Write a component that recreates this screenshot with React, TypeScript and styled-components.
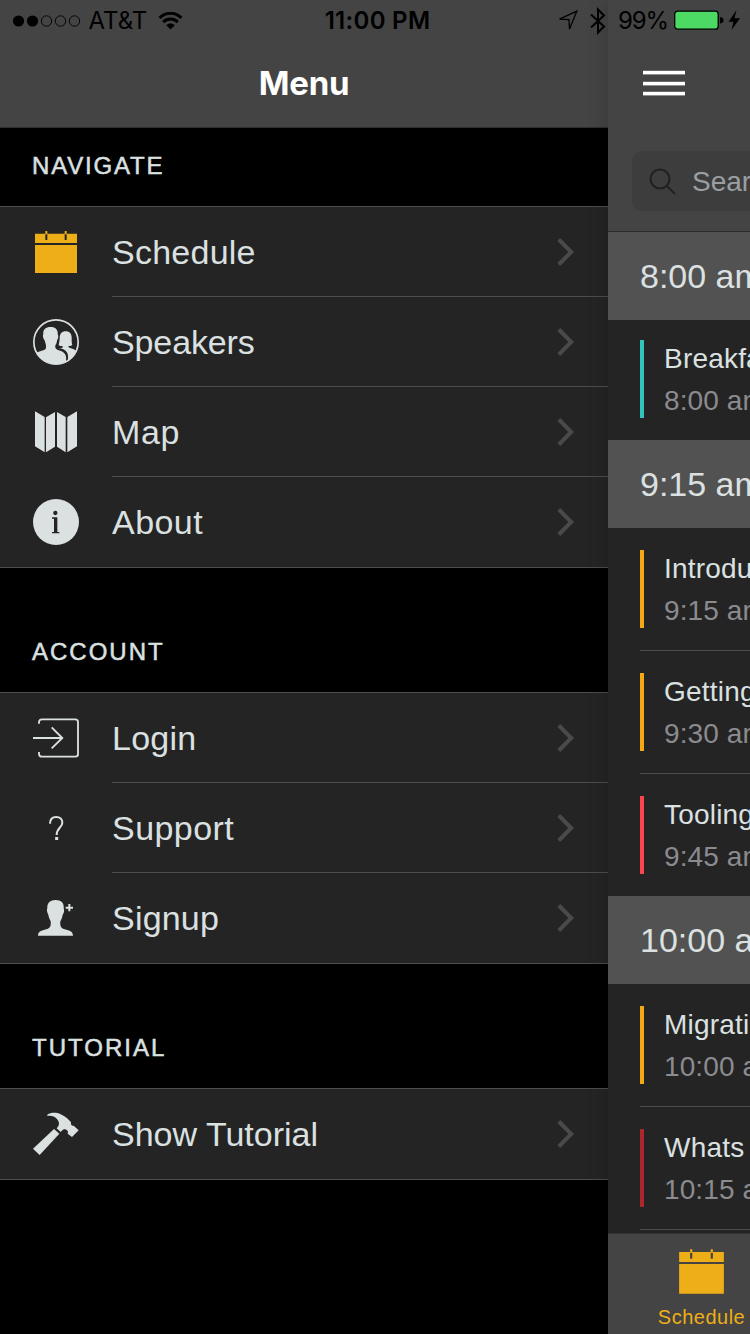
import React from "react";
import styled, { createGlobalStyle } from "styled-components";

const sans = `"Liberation Sans", Arial, Helvetica, sans-serif`;
const system = `Inter, "Liberation Sans", sans-serif`;

const colors = {
  bar: "#444444",
  row: "#242424",
  line: "#4d4d4d",
  text: "#dbe0e1",
  muted: "#8b8b8f",
  accent: "#eeae17",
};

const GlobalStyle = createGlobalStyle`
  *, *::before, *::after { box-sizing: border-box; }
  html, body { margin: 0; background: #000; }
  body { width: 750px; height: 1334px; overflow: hidden; }
`;

const Screen = styled.div`
  position: relative;
  display: flex;
  width: 750px;
  height: 1334px;
  overflow: hidden;
  background: #000;
  font-family: ${sans};
  color: ${colors.text};
`;

/* Status bar */

const StatusBar = styled.div`
  position: absolute;
  inset: 0 0 auto 0;
  z-index: 3;
  height: 42px;
  display: grid;
  grid-template-columns: 1fr auto 1fr;
  align-items: center;
  padding: 0 9px 0 12px;
  font: 400 24px/42px ${system};
  color: #000;
`;

const StatusGroup = styled.div<{ $end?: boolean }>`
  display: flex;
  align-items: center;
  gap: ${(p) => (p.$end ? 12 : 0)}px;
  height: 42px;
  justify-content: ${(p) => (p.$end ? "flex-end" : "flex-start")};
`;

const StatusText = styled.span<{ $bold?: boolean; $spacing?: number; $left?: number; $right?: number }>`
  font-weight: ${(p) => (p.$bold ? 600 : 400)};
  letter-spacing: ${(p) => p.$spacing ?? 0}px;
  margin-left: ${(p) => p.$left ?? 0}px;
  margin-right: ${(p) => p.$right ?? 0}px;
  white-space: nowrap;
`;

/* Menu side */

const MenuPane = styled.nav`
  width: 608px;
  flex: none;
  display: flex;
  flex-direction: column;
`;

const MenuHeader = styled.header`
  height: 128px;
  padding-top: 39px;
  background: ${colors.bar};
  border-bottom: 1px solid #2e2e2e;
  display: flex;
  align-items: center;
  justify-content: center;
`;

const MenuTitle = styled.h1`
  margin: 0;
  font: 700 33px/40px ${system};
  letter-spacing: -0.2px;
  color: #fff;
`;

const SectionLabel = styled.h2<{ $first?: boolean }>`
  margin: 0;
  height: ${(p) => (p.$first ? 78 : 124)}px;
  padding: 0 32px 25px;
  display: flex;
  align-items: flex-end;
  font-size: 24px;
  line-height: 30px;
  font-weight: 400;
  letter-spacing: ${(p) => (p.$first ? 1.8 : 2)}px;
  -webkit-text-stroke: 0.5px ${colors.text};
`;

const MenuList = styled.ul`
  list-style: none;
  margin: 0;
  padding: 0;
  background: ${colors.row};
  border-top: 1px solid ${colors.line};
  border-bottom: 1px solid ${colors.line};
`;

const MenuRow = styled.li`
  display: flex;
  align-items: stretch;
  height: 90px;
  padding-left: 33px;
`;

const IconSlot = styled.div<{ $active?: boolean }>`
  width: 79px;
  display: flex;
  align-items: center;
  color: ${(p) => (p.$active ? colors.accent : colors.text)};
`;

const RowBody = styled.div`
  flex: 1;
  display: flex;
  align-items: center;
  justify-content: space-between;
  padding-right: 33px;
  border-bottom: 1px solid ${colors.line};

  ${MenuRow}:last-child & {
    border-bottom-color: transparent;
  }
`;

const RowLabel = styled.span<{ $spacing: number }>`
  font-size: 34px;
  line-height: 40px;
  letter-spacing: ${(p) => p.$spacing}px;
`;

/* Content side */

const ContentPane = styled.main`
  position: relative;
  z-index: 1;
  width: 142px;
  height: 1334px;
  display: flex;
  flex-direction: column;
  overflow: hidden;
  white-space: nowrap;
  background: ${colors.row};
`;

const ContentFrame = styled.div`
  flex: none;
  width: 142px;
  box-shadow: 0 0 20px rgba(0, 0, 0, 0.2);
  z-index: 1;
`;

const Toolbar = styled.header`
  flex: none;
  height: 232px;
  background: ${colors.bar};
  border-bottom: 1px solid #2c2c2c;
  padding: 71px 0 0 24px;
`;

const MenuButton = styled.div`
  width: 42px;
  height: 24px;
  margin-left: 11px;
  display: flex;
  flex-direction: column;
  justify-content: space-between;
`;

const MenuBar = styled.span`
  height: 3px;
  background: #fff;
  box-shadow: 0 1px rgba(255, 255, 255, 0.4), 0 -1px rgba(255, 255, 255, 0.2);
`;

const SearchBox = styled.div`
  margin-top: 56px;
  width: 400px;
  height: 60px;
  border-radius: 10px;
  background: #3d3d3d;
  display: flex;
  align-items: center;
  padding: 2px 0 0 17px;
  gap: 15px;
  font-size: 28px;
  color: #9b9fa1;
`;

const GroupHeader = styled.h3`
  flex: none;
  margin: 0;
  height: 88px;
  padding-left: 32px;
  background: #525252;
  font-weight: 400;
  font-size: 34px;
  line-height: 88px;
`;

const Session = styled.div<{ $single?: boolean; $divided?: boolean }>`
  flex: none;
  margin-left: 32px;
  height: ${(p) => (p.$single ? 120 : p.$divided ? 123 : 122)}px;
  padding-top: ${(p) => (p.$single ? 20 : 22)}px;
  border-bottom: ${(p) => (p.$divided ? `1px solid ${colors.line}` : "none")};
`;

const SessionBody = styled.div<{ $color: string }>`
  height: 78px;
  border-left: 4px solid ${(p) => p.$color};
  padding-left: 20px;
`;

const SessionTitle = styled.div`
  font-size: 28px;
  line-height: 38px;
  letter-spacing: 0.2px;
`;

const SessionTime = styled.div`
  font-size: 28px;
  line-height: 38px;
  margin-top: 4px;
  letter-spacing: 0.1px;
  color: ${colors.muted};
`;

const TabBar = styled.footer`
  flex: none;
  margin-top: 3px;
  height: 101px;
  padding: 13px 0 0 45px;
  background: ${colors.bar};
  border-top: 1px solid #333;
`;

const Tab = styled.div`
  width: 97px;
  display: flex;
  flex-direction: column;
  align-items: center;
  gap: 9px;
  color: ${colors.accent};
  font-size: 20px;
  line-height: 24px;
  letter-spacing: 0.5px;
`;

/* Icons, drawn on a 138-unit grid */

const Glyph = ({ size = 46, children }: { size?: number; children: React.ReactNode }) => (
  <svg width={size} height={size} viewBox="0 0 138 138" fill="currentColor">
    {children}
  </svg>
);

const CalendarIcon = ({ size, gap = colors.row }: { size?: number; gap?: string }) => (
  <Glyph size={size}>
    <path d="M6 14H132V42H6Z M6 48H132V132H6Z" />
    <path d="M37 6H43V15H37Z M95 6H101V15H95Z" />
    <path d="M37 16H43V33H37Z M95 16H101V33H95Z" fill={gap} />
  </Glyph>
);

const SpeakersIcon = () => (
  <Glyph>
    <defs>
      <clipPath id="badge">
        <circle cx="69" cy="69" r="67" />
      </clipPath>
    </defs>
    <circle cx="69" cy="69" r="66.5" fill="none" stroke="currentColor" strokeWidth="5" />
    <g clipPath="url(#badge)">
      <path d="M53 24C38 24 29 32 31 46C28 49 31 61 35 64C36 70 39 76 39 80C39 90 38 91 33 93L8 101L16 138H97C99 128 101 117 98 109C94 99 85 96 75 93C68 91 66 87 67 79C70 75 72 69 72 64C76 61 77 49 74 46C76 32 67 24 53 24Z" />
      <path d="M98 37C86 37 80 45 80 57C80 66 78 72 77 79C82 82 87 82 90 83C90 86 87 87 77 87C91 89 101 95 104 105C106 113 105 122 103 132L138 106C130 94 124 91 114 88C107 86 106 85 106 82C110 81 115 81 118 78C116 72 116 66 116 57C116 45 110 37 98 37Z" />
    </g>
  </Glyph>
);

const MapIcon = () => (
  <Glyph>
    <path d="M6 7L35 24V130L6 112Z M39 25L66 9V113L39 130Z M72 9L98 24V130L72 113Z M103 24L132 7V112L103 130Z" />
  </Glyph>
);

const InfoIcon = () => (
  <Glyph>
    <circle cx="69" cy="69" r="69" />
    <g fill={colors.row}>
      <circle cx="67" cy="42" r="6.5" />
      <path d="M57 55H73V99H79V103H57V99H63V59H57Z" />
    </g>
  </Glyph>
);

const LoginIcon = () => (
  <Glyph>
    <g fill="none" stroke="currentColor" strokeWidth="5.5">
      <path d="M18 26V22Q18 13 27 13H127Q135 13 135 21V118Q135 125 127 125H27Q18 125 18 117V111" />
      <path d="M0 69H88M56 37L88 69L56 100" />
    </g>
  </Glyph>
);

const HelpIcon = () => (
  <Glyph>
    <path
      d="M51 56C51 43 58 36 69.500 36C81 36 88 43 88 53C88 68 71 68 71 90"
      fill="none"
      stroke="currentColor"
      strokeWidth="6"
    />
    <rect x="66.500" y="96" width="9" height="9" />
  </Glyph>
);

const SignupIcon = () => (
  <Glyph>
    <path d="M68 15C52 15 42 23 43 40C40 44 43 55 46 59C47 67 51 74 53 79C54 90 53 97 45 101C32 105 15 106 15 122H120C120 106 103 105 90 101C82 97 81 90 82 79C85 74 88 67 89 59C93 55 95 44 92 40C94 23 84 15 68 15Z" />
    <path d="M106 27H112V35H120V41H112V49H106V41H98V35H106Z" />
  </Glyph>
);

const HammerIcon = () => (
  <Glyph>
    <path d="M0 113L63 54L79 68L20 132Z" />
    <path d="M43 11C54 4 70 4 83 10C97 17 108 26 114 34C113 42 116 46 122 44L137 58L117 78L104 68C107 61 103 57 97 55C92 53 88 56 83 63L71 52C82 42 78 31 72 24C64 15 54 13 43 15Z" />
  </Glyph>
);

const Chevron = () => (
  <svg width="18" height="30" viewBox="0 0 18 30" fill="none">
    <path d="M1.800 2.500L14.200 15L1.800 27.500" stroke="#4a4a4a" strokeWidth="4" />
  </svg>
);

const SearchIcon = () => (
  <svg width="28" height="28" viewBox="0 0 28 28" fill="none" stroke="#202020" strokeWidth="2">
    <circle cx="11" cy="11" r="9.500" />
    <path d="M17.500 17.500L26 26" />
  </svg>
);

const SignalIcon = () => (
  <svg width="69" height="12" viewBox="0 0 69 12">
    {[0, 1, 2, 3, 4].map((i) => (
      <circle
        key={i}
        cx={6.5 + i * 14}
        cy="6"
        r={i < 2 ? 5.6 : 5.2}
        fill={i < 2 ? "#000" : "none"}
        stroke={i < 2 ? "none" : "#000"}
        strokeWidth="0.9"
      />
    ))}
  </svg>
);

const WifiIcon = () => (
  <svg width="25" height="19" viewBox="0 0 26 20" fill="none" stroke="#000" strokeWidth="3.200">
    <path d="M1.500 6.200C8 -0.400 18 -0.400 24.500 6.200" />
    <path d="M5.300 10.600C9.500 6.400 16.500 6.400 20.700 10.600" />
    <path d="M8.500 14C11 11.400 15 11.400 17.500 14L13 18.500Z" fill="#000" stroke="none" />
  </svg>
);

const LocationIcon = () => (
  <svg width="20" height="22" viewBox="0 0 20 22" fill="none" stroke="#000" strokeWidth="1.300">
    <path d="M18.800 1.200L1.500 9.200L11 9.700L11.500 19Z" />
  </svg>
);

const BluetoothIcon = () => (
  <svg width="16" height="28" viewBox="0 0 16 28" fill="none" stroke="#000" strokeWidth="2">
    <path d="M1 7.500L14 19.500L8 25.500V2.500L14 8.500L1 20.500" />
  </svg>
);

const BatteryIcon = () => (
  <svg width="67" height="22" viewBox="0 0 67 22">
    <rect x="0.700" y="1.200" width="43.500" height="18" rx="3" fill="#4cd964" stroke="#000" strokeWidth="1.300" />
    <path d="M46 7Q49.500 7.500 49.500 10.200T46 13.500Z" fill="#000" />
    <path d="M62.500 0L54.500 11.800H59.500L57.500 20L66 8.300H60.500Z" fill="#000" />
  </svg>
);

const menuSections = [
  {
    title: "NAVIGATE",
    items: [
      { label: "Schedule", icon: <CalendarIcon />, active: true, spacing: 0.25 },
      { label: "Speakers", icon: <SpeakersIcon />, spacing: -0.12 },
      { label: "Map", icon: <MapIcon />, spacing: 0.6 },
      { label: "About", icon: <InfoIcon />, spacing: 0.45 },
    ],
  },
  {
    title: "ACCOUNT",
    items: [
      { label: "Login", icon: <LoginIcon />, spacing: 0.25 },
      { label: "Support", icon: <HelpIcon />, spacing: 0.45 },
      { label: "Signup", icon: <SignupIcon />, spacing: 0.2 },
    ],
  },
  {
    title: "TUTORIAL",
    items: [{ label: "Show Tutorial", icon: <HammerIcon />, spacing: 0 }],
  },
];

const sessionGroups = [
  { time: "8:00 am", sessions: [{ title: "Breakfast", time: "8:00 am", color: "#32c4bd" }] },
  {
    time: "9:15 am",
    sessions: [
      { title: "Introduction", time: "9:15 am", color: "#f3a914" },
      { title: "Getting", time: "9:30 am", color: "#f3a914" },
      { title: "Tooling", time: "9:45 am", color: "#fb4650" },
    ],
  },
  {
    time: "10:00 am",
    sessions: [
      { title: "Migrating", time: "10:00 am", color: "#f3a914" },
      { title: "Whats New", time: "10:15 am", color: "#ac272d" },
    ],
  },
];

export default function App() {
  return (
    <Screen>
      <GlobalStyle />
      <StatusBar>
        <StatusGroup>
          <SignalIcon />
          <StatusText $left={7.5} $right={11}>AT&amp;T</StatusText>
          <WifiIcon />
        </StatusGroup>
        <StatusText $bold $spacing={0.3} $left={2}>11:00 PM</StatusText>
        <StatusGroup $end>
          <LocationIcon />
          <BluetoothIcon />
          <StatusText $right={-6} $spacing={-1.1}>99%</StatusText>
          <BatteryIcon />
        </StatusGroup>
      </StatusBar>

      <MenuPane>
        <MenuHeader>
          <MenuTitle>Menu</MenuTitle>
        </MenuHeader>
        {menuSections.map((section, i) => (
          <React.Fragment key={section.title}>
            <SectionLabel $first={i === 0}>{section.title}</SectionLabel>
            <MenuList>
              {section.items.map((item) => (
                <MenuRow key={item.label}>
                  <IconSlot $active={"active" in item}>{item.icon}</IconSlot>
                  <RowBody>
                    <RowLabel $spacing={item.spacing}>{item.label}</RowLabel>
                    <Chevron />
                  </RowBody>
                </MenuRow>
              ))}
            </MenuList>
          </React.Fragment>
        ))}
      </MenuPane>

      <ContentFrame>
        <ContentPane>
          <Toolbar>
            <MenuButton>
              <MenuBar />
              <MenuBar />
              <MenuBar />
            </MenuButton>
            <SearchBox>
              <SearchIcon />
              Search
            </SearchBox>
          </Toolbar>
          {sessionGroups.map((group, g) => (
            <React.Fragment key={group.time}>
              <GroupHeader>{group.time}</GroupHeader>
              {group.sessions.map((s, i) => (
                <Session
                  key={s.title}
                  $single={group.sessions.length === 1}
                  $divided={i < group.sessions.length - 1 || g === sessionGroups.length - 1}
                >
                  <SessionBody $color={s.color}>
                    <SessionTitle>{s.title}</SessionTitle>
                    <SessionTime>{s.time}</SessionTime>
                  </SessionBody>
                </Session>
              ))}
            </React.Fragment>
          ))}
          <TabBar>
            <Tab>
              <CalendarIcon size={49} gap={colors.bar} />
              Schedule
            </Tab>
          </TabBar>
        </ContentPane>
      </ContentFrame>
    </Screen>
  );
}
